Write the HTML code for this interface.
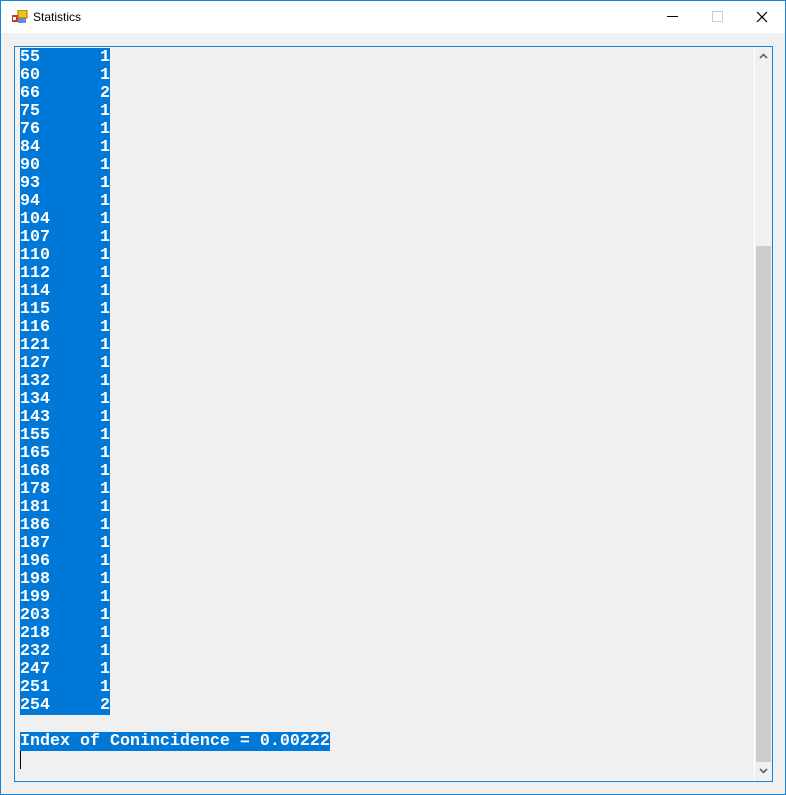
<!DOCTYPE html>
<html><head><style>
body{margin:0;width:786px;height:795px;overflow:hidden;background:#f0f0f0;position:relative;font-family:"Liberation Sans",sans-serif}
.win{position:absolute;left:0;top:0;width:784px;height:793px;border:1px solid #1883d7;background:#f0f0f0}
.title{position:absolute;left:0;top:0;width:784px;height:32px;background:#fff}
.t{position:absolute;left:32px;top:9px;font-size:12px;color:#000}
.box{position:absolute;left:13px;top:45px;width:757px;height:734px;border:1px solid #1883d7;background:#f0f0f0}
.sb{position:absolute;left:739px;top:0;width:17px;height:734px;border-left:1px solid #fff;background:#f0f0f0}
.thumb{position:absolute;left:1px;top:199px;width:15px;height:516px;background:#cdcdcd}
pre{position:absolute;left:5px;top:2px;margin:0;font-family:"Liberation Mono",monospace;font-weight:bold;font-size:16.67px;line-height:18px;color:#fff}
.sel{background:#0078d7}
.cur{position:absolute;left:5px;top:704px;width:1px;height:18px;background:#000}
</style></head><body>
<div class="win">
<div class="title">
<svg style="position:absolute;left:11px;top:9px" width="16" height="14"><rect x="0" y="5" width="6" height="7" fill="#c33"/><rect x="1" y="7" width="3" height="3" fill="#fff"/><rect x="6" y="0" width="9" height="8" fill="#f0c020" stroke="#a07000"/><rect x="6" y="8" width="8" height="5" fill="#6a8ad0"/></svg>
<div class="t">Statistics</div>
<div style="position:absolute;left:666px;top:15px;width:11px;height:1px;background:#000"></div>
<div style="position:absolute;left:711px;top:10px;width:9px;height:9px;border:1px solid #ccc"></div>
<svg style="position:absolute;left:755px;top:10px" width="12" height="12"><path d="M1 1L11 11M11 1L1 11" stroke="#000" stroke-width="1.2"/></svg>
</div>
<div class="box">
<pre><span class="sel">55      1</span>
<span class="sel">60      1</span>
<span class="sel">66      2</span>
<span class="sel">75      1</span>
<span class="sel">76      1</span>
<span class="sel">84      1</span>
<span class="sel">90      1</span>
<span class="sel">93      1</span>
<span class="sel">94      1</span>
<span class="sel">104     1</span>
<span class="sel">107     1</span>
<span class="sel">110     1</span>
<span class="sel">112     1</span>
<span class="sel">114     1</span>
<span class="sel">115     1</span>
<span class="sel">116     1</span>
<span class="sel">121     1</span>
<span class="sel">127     1</span>
<span class="sel">132     1</span>
<span class="sel">134     1</span>
<span class="sel">143     1</span>
<span class="sel">155     1</span>
<span class="sel">165     1</span>
<span class="sel">168     1</span>
<span class="sel">178     1</span>
<span class="sel">181     1</span>
<span class="sel">186     1</span>
<span class="sel">187     1</span>
<span class="sel">196     1</span>
<span class="sel">198     1</span>
<span class="sel">199     1</span>
<span class="sel">203     1</span>
<span class="sel">218     1</span>
<span class="sel">232     1</span>
<span class="sel">247     1</span>
<span class="sel">251     1</span>
<span class="sel">254     2</span>

<span class="sel">Index of Conincidence = 0.00222</span></pre>
<div class="cur"></div>
<div class="sb"><div class="thumb"></div>
<svg style="position:absolute;left:4px;top:6px" width="9" height="6"><path d="M1 5L4.5 1.5L8 5" stroke="#606060" stroke-width="1.6" fill="none"/></svg>
<svg style="position:absolute;left:4px;top:721px" width="9" height="6"><path d="M1 1L4.5 4.5L8 1" stroke="#606060" stroke-width="1.6" fill="none"/></svg>
</div>
</div>
</div>
</body></html>
